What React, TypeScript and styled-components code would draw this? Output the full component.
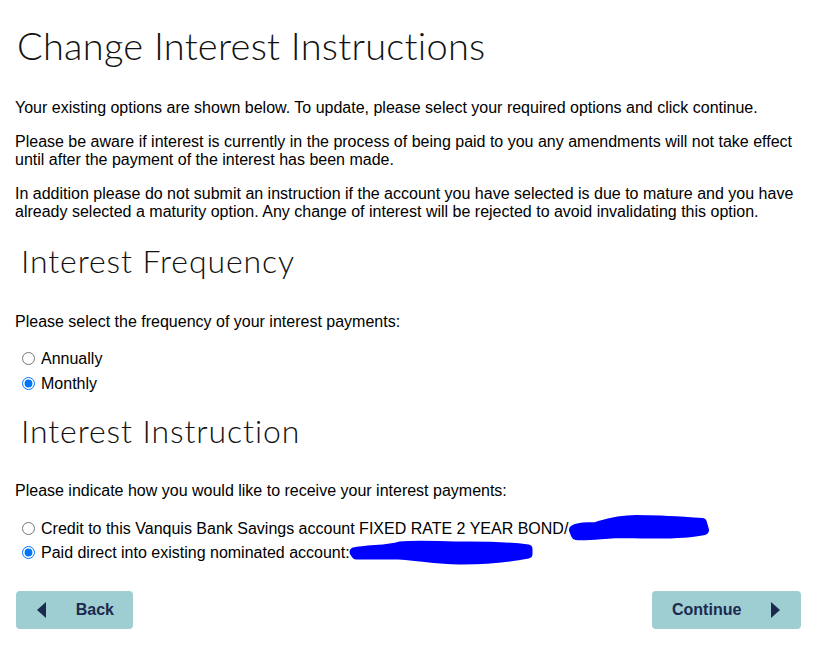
import React, { useState } from 'react';
import styled, { createGlobalStyle } from 'styled-components';

const GlobalStyle = createGlobalStyle`
    body {
        margin: 0;
        background: #fff;
        font-family: "Liberation Sans", Arial, sans-serif;
        color: #000;
    }
`;

const Page = styled.div`
    width: 824px;
    padding: 0 15px 20px 15px;
    box-sizing: border-box;
`;

const Title = styled.h1`
    font-family: Lato, "Open Sans", sans-serif;
    font-weight: 300;
    font-size: 38px;
    line-height: 46px;
    color: #111;
    margin: 22px 0 31px 2px;
    letter-spacing: 0.25px;
`;

const SubTitle = styled.h2<{ $top: number; $bottom: number }>`
    font-family: Lato, "Open Sans", sans-serif;
    font-weight: 300;
    font-size: 32px;
    line-height: 40px;
    color: #111;
    margin: ${(p) => `${p.$top}px 0 ${p.$bottom}px 6px`};
    letter-spacing: 0.9px;
`;

const Para = styled.p`
    font-size: 16px;
    line-height: 18px;
    margin: 0 0 16px 0;
`;

const OptionList = styled.div<{ $top: number; $gap: number }>`
    display: flex;
    flex-direction: column;
    gap: ${(p) => p.$gap}px;
    padding-top: ${(p) => p.$top}px;
    margin-left: 2px;
`;

const Option = styled.label`
    display: flex;
    align-items: center;
    font-size: 16px;
    line-height: 18px;
    white-space: nowrap;

    input {
        margin: 0 6px 0 5px;
        width: 13px;
        height: 13px;
        position: relative;
        top: -1px;
    }
`;

const Redact = styled.svg<{ $shift: number }>`
    display: block;
    margin: -5px 0 -5px -2px;
    position: relative;
    top: ${(p) => p.$shift}px;
`;

const ButtonRow = styled.div`
    display: flex;
    justify-content: space-between;
    margin-top: 29px;
    padding-right: 8px;
    padding-left: 1px;
`;

const NavButton = styled.button<{ $wide?: boolean }>`
    display: flex;
    align-items: center;
    justify-content: space-between;
    height: 38px;
    width: ${(p) => (p.$wide ? '149px' : '117px')};
    padding: ${(p) => (p.$wide ? '0 21px 0 20px' : '0 19px 0 21px')};
    background: #9ecdd2;
    border: none;
    border-radius: 4px;
    font-family: "Liberation Sans", Arial, sans-serif;
    font-weight: bold;
    font-size: 16px;
    color: #1b2a4e;
    cursor: pointer;
`;

const Arrow = ({ dir }: { dir: 'left' | 'right' }) => (
    <svg width="9" height="16" viewBox="0 0 9 16">
        {dir === 'left' ? (
            <polygon points="9,0 9,16 0,8" fill="#1b2a4e" />
        ) : (
            <polygon points="0,0 0,16 9,8" fill="#1b2a4e" />
        )}
    </svg>
);

export default function App() {
    const [frequency, setFrequency] = useState('monthly');
    const [instruction, setInstruction] = useState('nominated');

    return (
        <Page>
            <GlobalStyle />
            <Title>Change Interest Instructions</Title>
            <Para>Your existing options are shown below. To update, please select your required options and click continue.</Para>
            <Para>
                Please be aware if interest is currently in the process of being paid to you any amendments will not take effect
                until after the payment of the interest has been made.
            </Para>
            <Para>
                In addition please do not submit an instruction if the account you have selected is due to mature and you have
                already selected a maturity option. Any change of interest will be rejected to avoid invalidating this option.
            </Para>

            <SubTitle $top={20} $bottom={32}>Interest Frequency</SubTitle>
            <Para>Please select the frequency of your interest payments:</Para>
            <OptionList $top={3} $gap={7}>
                <Option>
                    <input type="radio" name="freq" checked={frequency === 'annually'} onChange={() => setFrequency('annually')} />
                    Annually
                </Option>
                <Option>
                    <input type="radio" name="freq" checked={frequency === 'monthly'} onChange={() => setFrequency('monthly')} />
                    Monthly
                </Option>
            </OptionList>

            <SubTitle $top={18} $bottom={31}>Interest Instruction</SubTitle>
            <Para>Please indicate how you would like to receive your interest payments:</Para>
            <OptionList $top={4} $gap={6}>
                <Option>
                    <input type="radio" name="instr" checked={instruction === 'credit'} onChange={() => setInstruction('credit')} />
                    Credit to this Vanquis Bank Savings account FIXED RATE 2 YEAR BOND/
                    <Redact $shift={-1} width="144" height="28" viewBox="0 0 144 28">
                        <path
                            d="M8 16 C14 12 22 14 30 13 C40 10 50 6 70 6 C95 6 120 8 136 9 L138 16 C120 20 90 20 60 19 C40 19 24 22 10 21 Z"
                            fill="#0000ff"
                            stroke="#0000ff"
                            strokeWidth="10"
                            strokeLinejoin="round"
                        />
                    </Redact>
                </Option>
                <Option>
                    <input type="radio" name="instr" checked={instruction === 'nominated'} onChange={() => setInstruction('nominated')} />
                    Paid direct into existing nominated account:
                    <Redact $shift={1} width="188" height="28" viewBox="0 0 188 28">
                        <path
                            d="M6 12 C20 9 40 10 52 6 C70 4 90 6 120 6 C145 6 165 7 180 9 L180 14 C160 18 140 20 115 20 C95 21 70 16 50 15 C35 15 20 15 8 15 Z"
                            fill="#0000ff"
                            stroke="#0000ff"
                            strokeWidth="9"
                            strokeLinejoin="round"
                        />
                    </Redact>
                </Option>
            </OptionList>

            <ButtonRow>
                <NavButton>
                    <Arrow dir="left" />
                    Back
                </NavButton>
                <NavButton $wide>
                    Continue
                    <Arrow dir="right" />
                </NavButton>
            </ButtonRow>
        </Page>
    );
}
